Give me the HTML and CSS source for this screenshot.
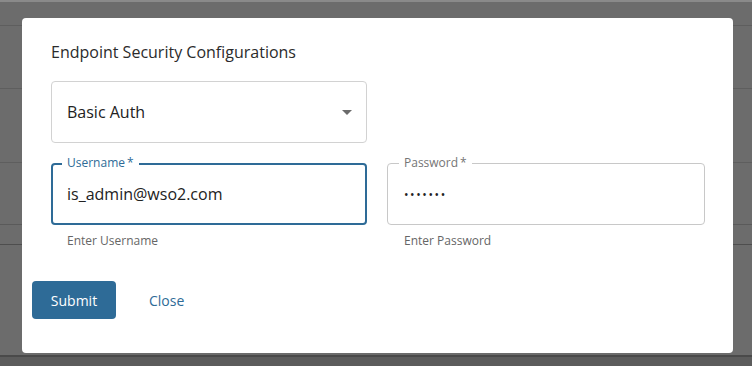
FILE: index.html
```html
<!DOCTYPE html>
<html lang="en">
<head>
<meta charset="utf-8">
<title>Endpoint Security Configurations</title>
<link rel="stylesheet" href="styles.css">
</head>
<body>
<div class="backdrop">
  <div class="dialog" role="dialog" aria-labelledby="dlg-title">
    <div class="content">
      <h2 class="title" id="dlg-title">Endpoint Security Configurations</h2>
      <div class="select">
        <span class="select-value">Basic Auth</span>
        <svg class="caret" width="10" height="5" viewBox="0 0 10 5"><path d="M0 0h10L5 5z" fill="#6b6b6b"/></svg>
      </div>
      <div class="row">
        <div class="col">
          <div class="field focused">
            <span class="label">Username<span class="req">*</span></span>
            <span class="value">is_admin@wso2.com</span>
          </div>
          <div class="helper">Enter Username</div>
        </div>
        <div class="col">
          <div class="field">
            <span class="label">Password<span class="req">*</span></span>
            <span class="value dots">•••••••</span>
          </div>
          <div class="helper">Enter Password</div>
        </div>
      </div>
    </div>
    <div class="actions">
      <button class="btn primary">Submit</button>
      <button class="btn text">Close</button>
    </div>
  </div>
</div>
</body>
</html>
```

FILE: styles.css
```css
* { box-sizing: border-box; }

html, body {
  margin: 0;
  padding: 0;
  height: 100%;
}

body {
  font-family: "Open Sans", "Noto Sans", "Liberation Sans", sans-serif;
  background-color: #6c6c6c;
  background-image:
    linear-gradient(to bottom, #8a8a8a 0, #8a8a8a 2px, transparent 2px),
    linear-gradient(to bottom, transparent 25px, #5e5e5e 25px, #5e5e5e 26px, transparent 26px),
    linear-gradient(to bottom, transparent 88px, #5e5e5e 88px, #5e5e5e 89px, transparent 89px),
    linear-gradient(to bottom, transparent 162px, #5e5e5e 162px, #5e5e5e 163px, transparent 163px),
    linear-gradient(to bottom, transparent 224px, #5a5a5a 224px, #5a5a5a 225px, transparent 225px),
    linear-gradient(to bottom, transparent 244px, #4e4e4e 244px, #4e4e4e 245px, transparent 245px),
    linear-gradient(to bottom, transparent 355px, #4a4a4a 355px, #4a4a4a 357px, #5c5c5c 357px);
  background-repeat: no-repeat;
  overflow: hidden;
}

.backdrop {
  padding: 18px 19px 0 22px;
}

.dialog {
  width: 711px;
  height: 335px;
  background: #fff;
  border-radius: 4px;
  display: flex;
  flex-direction: column;
}

.content {
  padding: 23px 28px 0 29px;
}

.title {
  margin: 0;
  font-size: 16px;
  line-height: 22px;
  font-weight: 400;
  color: #2b2b2b;
}

.select {
  margin-top: 18px;
  width: 316px;
  height: 62px;
  border: 1px solid #d2d2d2;
  border-radius: 4px;
  display: flex;
  align-items: center;
  justify-content: space-between;
  padding: 0 14px 0 15px;
}

.select-value {
  font-size: 16px;
  color: #222;
}

.caret {
  display: block;
  margin-top: 1px;
}

.row {
  margin-top: 20px;
  display: flex;
  gap: 20px;
}

.col {
  width: 318px;
}

.col:first-child {
  width: 316px;
}

.field {
  position: relative;
  height: 62px;
  border: 1px solid #c8c8c8;
  border-radius: 4px;
  display: flex;
  align-items: center;
  padding: 0 16px;
}

.field.focused {
  border: 2px solid #2e6b97;
  padding: 0 14px;
}

.label {
  position: absolute;
  top: -8px;
  left: 11px;
  padding: 0 5px;
  background: #fff;
  font-size: 12px;
  line-height: 14px;
  color: #757575;
}

.focused .label {
  left: 9px;
  top: -9px;
  color: #2e6b97;
}

.req {
  margin-left: 2px;
}

.value {
  font-size: 16px;
  color: #222;
}

.dots {
  font-size: 12px;
  letter-spacing: 1.6px;
  color: #222;
}

.helper {
  margin-top: 8px;
  padding-left: 16px;
  font-size: 12px;
  line-height: 16px;
  color: #666;
}

.col:last-child .helper {
  padding-left: 17px;
}

.actions {
  margin-top: 32px;
  padding-left: 10px;
  display: flex;
  align-items: center;
  gap: 17px;
}

.btn {
  font-family: inherit;
  font-size: 14px;
  border: none;
  cursor: pointer;
  height: 38px;
  border-radius: 4px;
}

.btn.primary {
  width: 84px;
  background: #2e6b97;
  color: #fff;
}

.btn.text {
  background: transparent;
  color: #2e6b97;
  padding: 0 16px;
}
```
